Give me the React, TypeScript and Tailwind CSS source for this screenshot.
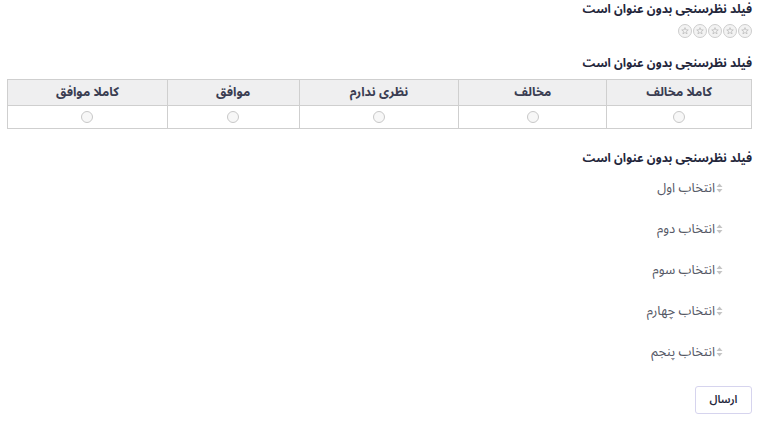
import React from 'react'

const cols = [
  { label: 'کاملا مخالف', w: 'w-[145px]' },
  { label: 'مخالف', w: 'w-[148px]' },
  { label: 'نظری ندارم', w: 'w-[160px]' },
  { label: 'موافق', w: 'w-[132px]' },
  { label: 'کاملا موافق', w: 'w-[160px]' },
]

const options = ['انتخاب اول', 'انتخاب دوم', 'انتخاب سوم', 'انتخاب چهارم', 'انتخاب پنجم']

function StarCircle() {
  return (
    <span className="flex h-[14px] w-[14px] shrink-0 items-center justify-center rounded-full border border-[#cdcdcd] bg-[#f3f3f3]">
      <svg viewBox="0 0 10 10" aria-hidden="true" className="h-[8px] w-[8px]">
        <path
          d="M5 0.8 L6.1 3.6 L9.1 3.7 L6.8 5.6 L7.6 8.6 L5 6.9 L2.4 8.6 L3.2 5.6 L0.9 3.7 L3.9 3.6 Z"
          fill="none"
          stroke="#b8b8b8"
          strokeWidth="0.9"
          strokeLinejoin="round"
        />
      </svg>
    </span>
  )
}

function SortIcon() {
  return (
    <svg viewBox="0 0 7 10" aria-hidden="true" className="h-[10px] w-[7px] shrink-0">
      <path d="M3.5 0.5 L6.5 4 L0.5 4 Z" fill="#c4c4c4" />
      <path d="M3.5 9.5 L6.5 6 L0.5 6 Z" fill="#c4c4c4" />
    </svg>
  )
}

function Radio() {
  return <span className="inline-block h-[12px] w-[12px] rounded-full border border-[#c8c8c8] bg-[#f7f7f7]" />
}

export default function App() {
  return (
    <div
      dir="rtl"
      className="min-h-screen bg-white px-[12px] pt-[1px] text-[#23263b] font-['Noto_Sans_Arabic','Vazirmatn','DejaVu_Sans',sans-serif]"
    >
      <section>
        <h2 className="text-[12px] font-bold leading-[18px]">فیلد نظرسنجی بدون عنوان است</h2>
        <div className="mt-[5px] flex gap-[1px]">
          {[0, 1, 2, 3, 4].map((i) => (
            <StarCircle key={i} />
          ))}
        </div>
      </section>

      <section className="mt-[17px]">
        <h2 className="text-[12px] font-bold leading-[18px]">فیلد نظرسنجی بدون عنوان است</h2>
        <table className="mt-[6px] w-[745px] border-collapse text-[12.5px]">
          <thead>
            <tr className="bg-[#efeff0]">
              {cols.map((c) => (
                <th
                  key={c.label}
                  className={`${c.w} h-[26px] border border-[#cfcfcf] font-bold text-[#3a3d52]`}
                >
                  {c.label}
                </th>
              ))}
            </tr>
          </thead>
          <tbody>
            <tr>
              {cols.map((c) => (
                <td key={c.label} className="h-[23px] border border-[#cfcfcf] text-center align-middle">
                  <span className="flex items-center justify-center">
                    <Radio />
                  </span>
                </td>
              ))}
            </tr>
          </tbody>
        </table>
      </section>

      <section className="mt-[21px]">
        <h2 className="text-[12px] font-bold leading-[18px]">فیلد نظرسنجی بدون عنوان است</h2>
        <div className="mr-[29px] mt-[11px] flex flex-col gap-[23px]">
          {options.map((o) => (
            <div key={o} className="flex items-center gap-[1px] text-[13px] leading-[18px] text-[#555866]">
              <SortIcon />
              <span>{o}</span>
            </div>
          ))}
        </div>
      </section>

      <div className="mt-[25px] flex">
        <button
          type="button"
          className="h-[28px] w-[57px] rounded-[3px] border border-[#d6d4ee] bg-white text-[11px] font-semibold text-[#23263b]"
        >
          ارسال
        </button>
      </div>
    </div>
  )
}
